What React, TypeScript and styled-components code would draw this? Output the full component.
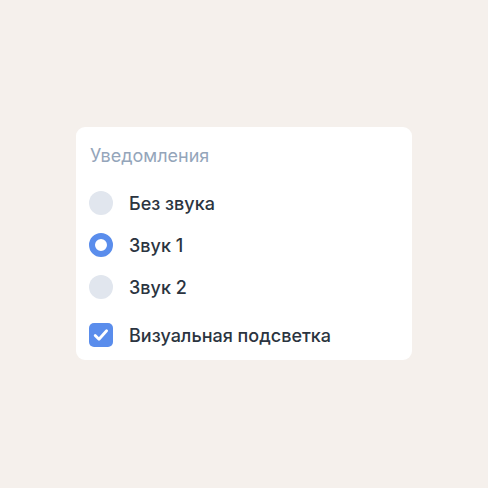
import React, { useState } from "react";
import styled, { createGlobalStyle } from "styled-components";

const GlobalStyle = createGlobalStyle`
	html, body {
		margin: 0;
		padding: 0;
		background: #f5f0ec;
	}
	body {
		font-family: "Inter", "Noto Sans", sans-serif;
	}
`;

const sounds = ["Без звука", "Звук 1", "Звук 2"];

function App() {
	const [sound, setSound] = useState(1);
	const [highlight, setHighlight] = useState(true);

	return (
		<>
			<GlobalStyle />
			<Page>
				<Card>
					<Title>Уведомления</Title>
					{sounds.map((label, i) => (
						<Row key={label} onClick={() => setSound(i)}>
							<Radio checked={sound === i} />
							<Label>{label}</Label>
						</Row>
					))}
					<CheckRow onClick={() => setHighlight((prev) => !prev)}>
						<Checkbox checked={highlight}>
							{highlight && (
								<svg width="24" height="24" viewBox="0 0 24 24" fill="none">
									<path
										d="M6.2 12.4l3.8 3.8 7.6-8.4"
										stroke="#fff"
										strokeWidth="2.8"
										strokeLinecap="round"
										strokeLinejoin="round"
									/>
								</svg>
							)}
						</Checkbox>
						<Label>Визуальная подсветка</Label>
					</CheckRow>
				</Card>
			</Page>
		</>
	);
}

export default App;

const Page = styled.div`
	width: 488px;
	height: 488px;
	display: flex;
	align-items: flex-start;
	justify-content: flex-start;
	padding: 127px 0 0 76px;
	box-sizing: border-box;
`;

const Card = styled.div`
	width: 336px;
	height: 233px;
	box-sizing: border-box;
	background: #ffffff;
	border-radius: 9px;
	padding: 18px 14px 0 13px;
	display: flex;
	flex-direction: column;
`;

const Title = styled.div`
	font-size: 18px;
	line-height: 22px;
	color: #94a5ba;
	margin-left: 1px;
	margin-bottom: 15px;
`;

const Row = styled.div`
	display: flex;
	align-items: center;
	gap: 16px;
	height: 42px;
	cursor: pointer;
`;

const CheckRow = styled(Row)`
	margin-top: 6px;
`;

interface IChecked {
	checked: boolean;
}

const Radio = styled.span<IChecked>`
	width: 24px;
	height: 24px;
	border-radius: 50%;
	box-sizing: border-box;
	flex-shrink: 0;
	background: ${(props) => (props.checked ? "#ffffff" : "#e1e6ee")};
	border: ${(props) => (props.checked ? "6.5px solid #5a8dec" : "none")};
`;

const Checkbox = styled.span<IChecked>`
	width: 24px;
	height: 24px;
	border-radius: 5px;
	flex-shrink: 0;
	display: flex;
	align-items: center;
	justify-content: center;
	background: ${(props) => (props.checked ? "#5a8dec" : "#e1e6ee")};
`;

const Label = styled.span`
	font-size: 18px;
	font-weight: 500;
	color: #2b3440;
	margin-top: 1px;
`;
